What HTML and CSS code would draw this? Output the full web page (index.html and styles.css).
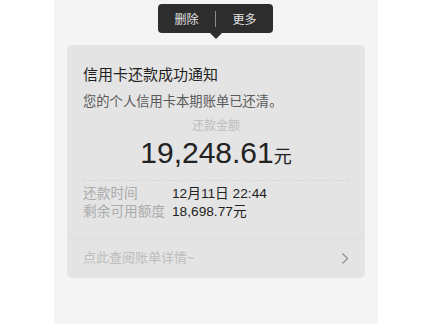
FILE: index.html
```html
<!DOCTYPE html>
<html lang="zh-CN">
<head>
    <meta charset="UTF-8">
    <meta name="viewport" content="width=device-width, initial-scale=1.0">
    <title>信用卡还款成功通知</title>
    <link rel="stylesheet" href="styles.css">
</head>
<body>
    <div class="page">
        <div class="menu">
            <span class="menu-item">删除</span>
            <span class="menu-sep"></span>
            <span class="menu-item">更多</span>
            <span class="menu-arrow"></span>
        </div>
        <div class="card">
            <div class="card-body">
                <h1 class="title">信用卡还款成功通知</h1>
                <p class="desc">您的个人信用卡本期账单已还清。</p>
                <div class="amount-label">还款金额</div>
                <div class="amount">19,248.61<span class="unit">元</span></div>
                <div class="rows">
                    <div class="row">
                        <span class="row-label">还款时间</span>
                        <span class="row-value">12月11日 22:44</span>
                    </div>
                    <div class="row">
                        <span class="row-label">剩余可用额度</span>
                        <span class="row-value">18,698.77元</span>
                    </div>
                </div>
            </div>
            <div class="card-foot">
                <span>点此查阅账单详情~</span>
                <svg class="chevron" width="8" height="13" viewBox="0 0 8 13">
                    <polyline points="1.5,1.5 6.5,6.5 1.5,11.5" fill="none" stroke="#8c8c8c" stroke-width="1.2"/>
                </svg>
            </div>
        </div>
    </div>
</body>
</html>
```

FILE: styles.css
```css
body {
    margin: 0;
    background-color: #fff;
    font-family: "Liberation Sans", "Noto Sans CJK SC", sans-serif;
}

.page {
    position: relative;
    width: 324px;
    height: 324px;
    margin-left: 54px;
    padding-top: 45px;
    box-sizing: border-box;
    background-color: #f4f4f4;
}

.menu {
    position: absolute;
    left: 104px;
    top: 4px;
    width: 115px;
    height: 29px;
    display: flex;
    align-items: center;
    background-color: #2d2d2d;
    border-radius: 4px;
}

.menu-item {
    width: 57px;
    text-align: center;
    font-size: 12px;
    color: #e2e2e2;
}

.menu-sep {
    width: 1px;
    height: 16px;
    background-color: #8a8a8a;
}

.menu-arrow {
    position: absolute;
    left: 52px;
    bottom: -6px;
    width: 0;
    height: 0;
    border-left: 6px solid transparent;
    border-right: 6px solid transparent;
    border-top: 6px solid #2d2d2d;
}

.card {
    margin: 0 13px;
    background-color: #e4e4e4;
    border-radius: 5px;
}

.card-body {
    padding: 20px 16px 0;
}

.title {
    margin: 0;
    font-size: 15px;
    font-weight: normal;
    line-height: 20px;
    color: #1f1f1f;
}

.desc {
    margin: 7px 0 0;
    font-size: 13.3px;
    line-height: 20px;
    color: #5a5a5a;
}

.amount-label {
    margin-top: 6px;
    text-align: center;
    font-size: 12px;
    line-height: 16px;
    color: #bdbdbd;
}

.amount {
    margin-top: 2px;
    text-align: center;
    font-size: 30px;
    line-height: 34px;
    color: #222;
}

.unit {
    font-size: 18px;
}

.rows {
    margin-top: 6px;
    padding-top: 4px;
    border-top: 1px dashed #d6d6d6;
}

.row {
    display: flex;
    font-size: 13.7px;
    line-height: 18px;
}

.row-label {
    width: 89px;
    color: #ababab;
}

.row-value {
    color: #222;
}

.card-foot {
    display: flex;
    justify-content: space-between;
    align-items: center;
    margin-top: 17px;
    padding: 10px 16px 11px;
    border-top: 1px solid #dedede;
    font-size: 13px;
    line-height: 18px;
    color: #bdbdbd;
}

.chevron {
    display: block;
    margin-right: 0;
}
```
